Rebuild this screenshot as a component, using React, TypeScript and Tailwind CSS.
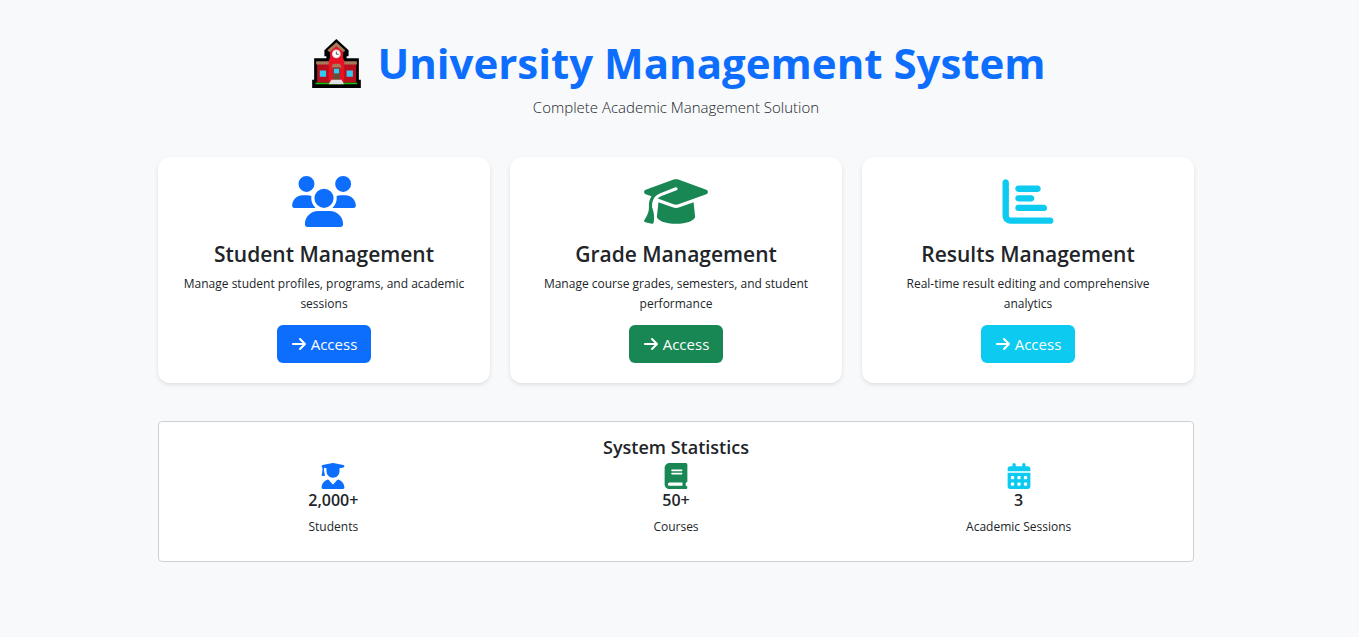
import type { IconType } from "react-icons";
import {
  FaArrowRight,
  FaBook,
  FaCalendarDays,
  FaChartBar,
  FaGraduationCap,
  FaUserGraduate,
  FaUsers,
} from "react-icons/fa6";

type Module = {
  title: string;
  text: string;
  href: string;
  icon: IconType;
  iconClass: string;
  buttonClass: string;
};

const modules: Module[] = [
  {
    title: "Student Management",
    text: "Manage student profiles, programs, and academic sessions",
    href: "#students",
    icon: FaUsers,
    iconClass: "text-[#0d6efd]",
    buttonClass: "bg-[#0d6efd]",
  },
  {
    title: "Grade Management",
    text: "Manage course grades, semesters, and student performance",
    href: "#grades",
    icon: FaGraduationCap,
    iconClass: "text-[#198754]",
    buttonClass: "bg-[#198754]",
  },
  {
    title: "Results Management",
    text: "Real-time result editing and comprehensive analytics",
    href: "#results",
    icon: FaChartBar,
    iconClass: "text-[#0dcaf0]",
    buttonClass: "bg-[#0dcaf0]",
  },
];

type Stat = { value: string; label: string; icon: IconType; iconClass: string };

const stats: Stat[] = [
  { value: "2,000+", label: "Students", icon: FaUserGraduate, iconClass: "text-[#0d6efd]" },
  { value: "50+", label: "Courses", icon: FaBook, iconClass: "text-[#198754]" },
  { value: "3", label: "Academic Sessions", icon: FaCalendarDays, iconClass: "text-[#0dcaf0]" },
];

function SchoolIcon() {
  return (
    <svg viewBox="36 28 147 148" className="size-[49px] shrink-0" aria-hidden="true">
      <path
        d="M109 28 L146 62 V80 H140 V86 H177 V151 H183 V176 H36 V151 H42 V86 H79 V80 H73 V62 Z"
        fill="#000"
      />
      <path d="M51 99 H169 V160 H51 Z" fill="#b80f1c" />
      <path d="M48 95 H87 V105 H48 Z M131 95 H171 V105 H131 Z" fill="#a8795a" />
      <path d="M90 62 L109 46 L129 62 V84 L133 94 V160 H86 V94 L90 84 Z" fill="#e81224" />
      <path d="M109 38 L136 62 L131 68 L109 50 L88 68 L82 62 Z" fill="#a8795a" />
      <circle cx="109" cy="73" r="13" fill="#d9d9d9" />
      <circle cx="109" cy="73" r="10" fill="#fff" />
      <path d="M109 66 V74 H116" fill="none" stroke="#555" strokeWidth="3" />
      <path d="M99 103 H120 L125 114 H94 Z" fill="#a8795a" />
      <path d="M99 114 H120 V153 H99 Z" fill="#6b4a37" />
      <path d="M102 118 H117 V132 H102 Z" fill="#35c8f5" />
      <path d="M59 123 H78 V142 H59 Z M140 123 H159 V142 H140 Z" fill="#35c8f5" />
      <path d="M46 160 H172 V165 H46 Z" fill="#13c410" />
      <path d="M94 151 H125 L132 165 H86 Z" fill="#e2e2e2" />
    </svg>
  );
}

function ModuleCard({ title, text, href, icon: Icon, iconClass, buttonClass }: Module) {
  return (
    <article className="flex flex-col items-center rounded-xl bg-white p-5 pt-[19px] text-center shadow-[0_2px_4px_rgba(0,0,0,0.1)]">
      <Icon className={`h-[51px] w-16 ${iconClass}`} aria-hidden="true" />
      <h2 className="mt-3 text-[21px] leading-[30px] font-semibold">{title}</h2>
      <p className="mt-[5px] text-xs leading-5">{text}</p>
      <a
        href={href}
        className={`mt-[11px] flex h-[38px] items-center gap-1 rounded-md px-3.5 text-[15px] text-white ${buttonClass}`}
      >
        <FaArrowRight className="size-4" aria-hidden="true" />
        Access
      </a>
    </article>
  );
}

export default function App() {
  return (
    <div className="min-h-screen bg-[#f8f9fb] pt-9 pr-[7px] pb-12 font-['Open_Sans','Noto_Sans',sans-serif] text-[#212529]">
      <main className="mx-auto max-w-[1036px]">
        <header className="text-center">
          <h1 className="flex items-center justify-center gap-4 pl-1.5 text-[42px] leading-[54px] font-bold text-[#0d6efd]">
            <SchoolIcon />
            University Management System
          </h1>
          <p className="mt-[5px] text-[15px] leading-6 font-light">Complete Academic Management Solution</p>
        </header>

        <div className="mt-[38px] grid grid-cols-3 gap-5">
          {modules.map((module) => (
            <ModuleCard key={module.title} {...module} />
          ))}
        </div>

        <section className="mt-[38px] rounded border border-[#cfd0d1] bg-white px-[3px] pt-3 pb-6 text-center">
          <h2 className="text-lg leading-[26px] font-semibold">System Statistics</h2>
          <dl className="mt-[3px] grid grid-cols-3">
            {stats.map(({ value, label, icon: Icon, iconClass }) => (
              <div key={label} className="flex flex-col items-center">
                <Icon className={`h-[26px] w-6 ${iconClass}`} aria-hidden="true" />
                <dt className="order-last mt-[5px] text-xs leading-5">{label}</dt>
                <dd className="text-base leading-[23px] font-semibold">{value}</dd>
              </div>
            ))}
          </dl>
        </section>
      </main>
    </div>
  );
}
